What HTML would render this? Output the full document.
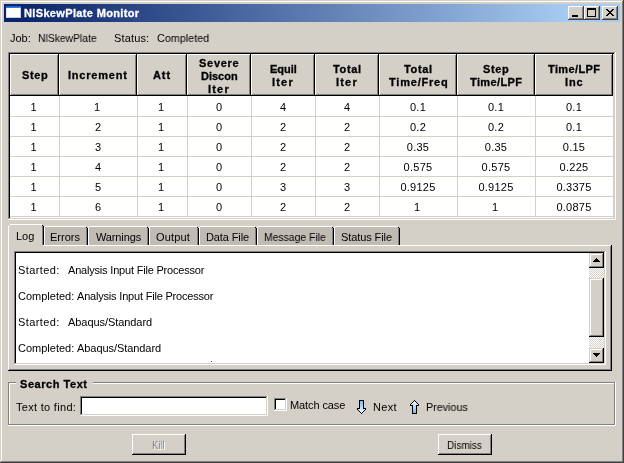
<!DOCTYPE html>
<html><head><meta charset="utf-8"><title>NlSkewPlate Monitor</title>
<style>
html,body{margin:0;padding:0;}
body{width:624px;height:463px;background:#d4d0c8;position:relative;overflow:hidden;font-family:"Liberation Sans",sans-serif;font-size:11px;line-height:13px;color:#000;}
body>div,body>span,body>svg{position:absolute;display:block;}
.t{white-space:pre;height:13px;will-change:transform;}
</style></head><body>
<div style="left:0px;top:0px;width:623px;height:1px;background:#d4d0c8;"></div>
<div style="left:0px;top:0px;width:1px;height:462px;background:#d4d0c8;"></div>
<div style="left:1px;top:1px;width:621px;height:1px;background:#ffffff;"></div>
<div style="left:1px;top:1px;width:1px;height:460px;background:#ffffff;"></div>
<div style="left:623px;top:0px;width:1px;height:463px;background:#404040;"></div>
<div style="left:0px;top:462px;width:624px;height:1px;background:#404040;"></div>
<div style="left:622px;top:1px;width:1px;height:461px;background:#808080;"></div>
<div style="left:1px;top:461px;width:622px;height:1px;background:#808080;"></div>
<div style="left:4px;top:4px;width:616px;height:18px;background:linear-gradient(to right,#0a246a 18px,#a6caf0 563px);"></div>
<svg style="left:6px;top:6px" width="15" height="12" viewBox="0 0 15 12" shape-rendering="crispEdges">
<rect x="0" y="0" width="15" height="12" fill="#fffffa"/>
<rect x="0" y="0" width="15" height="2" fill="#2b7de0"/>
<rect x="0" y="0" width="15" height="1" fill="#1a5fc8"/>
<rect x="0" y="2" width="1" height="10" fill="#e8e8f0"/>
<rect x="14" y="2" width="1" height="10" fill="#c8d0e8"/>
<rect x="0" y="11" width="15" height="1" fill="#c8d0e8"/>
<rect x="13" y="1" width="1" height="1" fill="#f08030"/>
</svg>
<span class="t" id="title" style="top:7px;left:24px;letter-spacing:0.350px;font-weight:bold;-webkit-text-stroke:0.3px;color:#fff;">NlSkewPlate Monitor</span>
<div style="left:568px;top:6px;width:16px;height:14px;background:#d4d0c8;"></div>
<div style="left:568px;top:6px;width:15px;height:1px;background:#ffffff;"></div>
<div style="left:568px;top:6px;width:1px;height:13px;background:#ffffff;"></div>
<div style="left:568px;top:19px;width:16px;height:1px;background:#404040;"></div>
<div style="left:583px;top:6px;width:1px;height:14px;background:#404040;"></div>
<div style="left:569px;top:18px;width:14px;height:1px;background:#808080;"></div>
<div style="left:582px;top:7px;width:1px;height:12px;background:#808080;"></div>
<div style="left:584px;top:6px;width:16px;height:14px;background:#d4d0c8;"></div>
<div style="left:584px;top:6px;width:15px;height:1px;background:#ffffff;"></div>
<div style="left:584px;top:6px;width:1px;height:13px;background:#ffffff;"></div>
<div style="left:584px;top:19px;width:16px;height:1px;background:#404040;"></div>
<div style="left:599px;top:6px;width:1px;height:14px;background:#404040;"></div>
<div style="left:585px;top:18px;width:14px;height:1px;background:#808080;"></div>
<div style="left:598px;top:7px;width:1px;height:12px;background:#808080;"></div>
<div style="left:602px;top:6px;width:16px;height:14px;background:#d4d0c8;"></div>
<div style="left:602px;top:6px;width:15px;height:1px;background:#ffffff;"></div>
<div style="left:602px;top:6px;width:1px;height:13px;background:#ffffff;"></div>
<div style="left:602px;top:19px;width:16px;height:1px;background:#404040;"></div>
<div style="left:617px;top:6px;width:1px;height:14px;background:#404040;"></div>
<div style="left:603px;top:18px;width:14px;height:1px;background:#808080;"></div>
<div style="left:616px;top:7px;width:1px;height:12px;background:#808080;"></div>
<div style="left:572px;top:15px;width:6px;height:2px;background:#000000;"></div>
<div style="left:587px;top:8px;width:9px;height:9px;background:#000000;"></div>
<div style="left:588px;top:10px;width:7px;height:6px;background:#d4d0c8;"></div>
<svg style="left:606px;top:9px" width="8" height="7" viewBox="0 0 8 7" shape-rendering="crispEdges">
<path d="M0 0h2v1h-2zM6 0h2v1h-2zM1 1h2v1h-2zM5 1h2v1h-2zM2 2h4v1h-4zM3 3h2v1h-2zM2 4h4v1h-4zM1 5h2v1h-2zM5 5h2v1h-2zM0 6h2v1h-2zM6 6h2v1h-2z" fill="#000"/></svg>
<span class="t" id="job" style="top:32px;left:10px;">Job:</span>
<span class="t" id="jobn" style="top:32px;left:38px;transform:scaleX(0.9410);transform-origin:0 0;">NlSkewPlate</span>
<span class="t" id="status" style="top:32px;left:114px;letter-spacing:0.150px;">Status:</span>
<span class="t" id="statv" style="top:32px;left:157px;transform:scaleX(0.9824);transform-origin:0 0;">Completed</span>
<div style="left:8px;top:52px;width:607px;height:1px;background:#808080;"></div>
<div style="left:8px;top:52px;width:1px;height:167px;background:#808080;"></div>
<div style="left:9px;top:53px;width:605px;height:1px;background:#000000;"></div>
<div style="left:9px;top:53px;width:1px;height:165px;background:#000000;"></div>
<div style="left:9px;top:218px;width:606px;height:1px;background:#d4d0c8;"></div>
<div style="left:614px;top:53px;width:1px;height:166px;background:#d4d0c8;"></div>
<div style="left:8px;top:219px;width:608px;height:1px;background:#ffffff;"></div>
<div style="left:615px;top:52px;width:1px;height:168px;background:#ffffff;"></div>
<div style="left:10px;top:96px;width:603px;height:122px;background:#ffffff;"></div>
<div style="left:10px;top:54px;width:48px;height:1px;background:#ffffff;"></div>
<div style="left:10px;top:54px;width:1px;height:41px;background:#ffffff;"></div>
<div style="left:11px;top:94px;width:47px;height:1px;background:#808080;"></div>
<div style="left:57px;top:55px;width:1px;height:40px;background:#808080;"></div>
<div style="left:10px;top:95px;width:49px;height:1px;background:#000000;"></div>
<div style="left:58px;top:54px;width:1px;height:42px;background:#000000;"></div>
<span class="t" id="h0_0" style="top:69px;left:21.9px;letter-spacing:0.600px;font-weight:bold;-webkit-text-stroke:0.3px;">Step</span>
<div style="left:59px;top:54px;width:77px;height:1px;background:#ffffff;"></div>
<div style="left:59px;top:54px;width:1px;height:41px;background:#ffffff;"></div>
<div style="left:60px;top:94px;width:76px;height:1px;background:#808080;"></div>
<div style="left:135px;top:55px;width:1px;height:40px;background:#808080;"></div>
<div style="left:59px;top:95px;width:78px;height:1px;background:#000000;"></div>
<div style="left:136px;top:54px;width:1px;height:42px;background:#000000;"></div>
<span class="t" id="h1_0" style="top:69px;left:68.4px;letter-spacing:0.787px;font-weight:bold;-webkit-text-stroke:0.3px;">Increment</span>
<div style="left:137px;top:54px;width:49px;height:1px;background:#ffffff;"></div>
<div style="left:137px;top:54px;width:1px;height:41px;background:#ffffff;"></div>
<div style="left:138px;top:94px;width:48px;height:1px;background:#808080;"></div>
<div style="left:185px;top:55px;width:1px;height:40px;background:#808080;"></div>
<div style="left:137px;top:95px;width:50px;height:1px;background:#000000;"></div>
<div style="left:186px;top:54px;width:1px;height:42px;background:#000000;"></div>
<span class="t" id="h2_0" style="top:69px;left:153.15px;letter-spacing:0.900px;font-weight:bold;-webkit-text-stroke:0.3px;">Att</span>
<div style="left:187px;top:54px;width:63px;height:1px;background:#ffffff;"></div>
<div style="left:187px;top:54px;width:1px;height:41px;background:#ffffff;"></div>
<div style="left:188px;top:94px;width:62px;height:1px;background:#808080;"></div>
<div style="left:249px;top:55px;width:1px;height:40px;background:#808080;"></div>
<div style="left:187px;top:95px;width:64px;height:1px;background:#000000;"></div>
<div style="left:250px;top:54px;width:1px;height:42px;background:#000000;"></div>
<span class="t" id="h3_0" style="top:57px;left:199.4px;letter-spacing:0.720px;font-weight:bold;-webkit-text-stroke:0.3px;">Severe</span>
<span class="t" id="h3_1" style="top:70px;left:200.9px;font-weight:bold;-webkit-text-stroke:0.3px;">Discon</span>
<span class="t" id="h3_2" style="top:83px;left:208.4px;letter-spacing:1.200px;font-weight:bold;-webkit-text-stroke:0.3px;">Iter</span>
<div style="left:251px;top:54px;width:63px;height:1px;background:#ffffff;"></div>
<div style="left:251px;top:54px;width:1px;height:41px;background:#ffffff;"></div>
<div style="left:252px;top:94px;width:62px;height:1px;background:#808080;"></div>
<div style="left:313px;top:55px;width:1px;height:40px;background:#808080;"></div>
<div style="left:251px;top:95px;width:64px;height:1px;background:#000000;"></div>
<div style="left:314px;top:54px;width:1px;height:42px;background:#000000;"></div>
<span class="t" id="h4_0" style="top:63px;left:269.9px;font-weight:bold;-webkit-text-stroke:0.3px;">Equil</span>
<span class="t" id="h4_1" style="top:76px;left:272.4px;letter-spacing:1.200px;font-weight:bold;-webkit-text-stroke:0.3px;">Iter</span>
<div style="left:315px;top:54px;width:63px;height:1px;background:#ffffff;"></div>
<div style="left:315px;top:54px;width:1px;height:41px;background:#ffffff;"></div>
<div style="left:316px;top:94px;width:62px;height:1px;background:#808080;"></div>
<div style="left:377px;top:55px;width:1px;height:40px;background:#808080;"></div>
<div style="left:315px;top:95px;width:64px;height:1px;background:#000000;"></div>
<div style="left:378px;top:54px;width:1px;height:42px;background:#000000;"></div>
<span class="t" id="h5_0" style="top:63px;left:332.9px;letter-spacing:0.675px;font-weight:bold;-webkit-text-stroke:0.3px;">Total</span>
<span class="t" id="h5_1" style="top:76px;left:336.4px;letter-spacing:1.200px;font-weight:bold;-webkit-text-stroke:0.3px;">Iter</span>
<div style="left:379px;top:54px;width:77px;height:1px;background:#ffffff;"></div>
<div style="left:379px;top:54px;width:1px;height:41px;background:#ffffff;"></div>
<div style="left:380px;top:94px;width:76px;height:1px;background:#808080;"></div>
<div style="left:455px;top:55px;width:1px;height:40px;background:#808080;"></div>
<div style="left:379px;top:95px;width:78px;height:1px;background:#000000;"></div>
<div style="left:456px;top:54px;width:1px;height:42px;background:#000000;"></div>
<span class="t" id="h6_0" style="top:63px;left:403.9px;letter-spacing:0.675px;font-weight:bold;-webkit-text-stroke:0.3px;">Total</span>
<span class="t" id="h6_1" style="top:76px;left:388.9px;letter-spacing:0.788px;font-weight:bold;-webkit-text-stroke:0.3px;">Time/Freq</span>
<div style="left:457px;top:54px;width:77px;height:1px;background:#ffffff;"></div>
<div style="left:457px;top:54px;width:1px;height:41px;background:#ffffff;"></div>
<div style="left:458px;top:94px;width:76px;height:1px;background:#808080;"></div>
<div style="left:533px;top:55px;width:1px;height:40px;background:#808080;"></div>
<div style="left:457px;top:95px;width:78px;height:1px;background:#000000;"></div>
<div style="left:534px;top:54px;width:1px;height:42px;background:#000000;"></div>
<span class="t" id="h7_0" style="top:63px;left:483.4px;letter-spacing:0.600px;font-weight:bold;-webkit-text-stroke:0.3px;">Step</span>
<span class="t" id="h7_1" style="top:76px;left:469.9px;letter-spacing:0.386px;font-weight:bold;-webkit-text-stroke:0.3px;">Time/LPF</span>
<div style="left:535px;top:54px;width:77px;height:1px;background:#ffffff;"></div>
<div style="left:535px;top:54px;width:1px;height:41px;background:#ffffff;"></div>
<div style="left:536px;top:94px;width:76px;height:1px;background:#808080;"></div>
<div style="left:611px;top:55px;width:1px;height:40px;background:#808080;"></div>
<div style="left:535px;top:95px;width:78px;height:1px;background:#000000;"></div>
<div style="left:612px;top:54px;width:1px;height:42px;background:#000000;"></div>
<span class="t" id="h8_0" style="top:63px;left:547.9px;letter-spacing:0.386px;font-weight:bold;-webkit-text-stroke:0.3px;">Time/LPF</span>
<span class="t" id="h8_1" style="top:76px;left:565.15px;letter-spacing:0.900px;font-weight:bold;-webkit-text-stroke:0.3px;">Inc</span>
<div style="left:59px;top:96px;width:1px;height:121px;background:#d4d0c8;"></div>
<div style="left:137px;top:96px;width:1px;height:121px;background:#d4d0c8;"></div>
<div style="left:187px;top:96px;width:1px;height:121px;background:#d4d0c8;"></div>
<div style="left:251px;top:96px;width:1px;height:121px;background:#d4d0c8;"></div>
<div style="left:315px;top:96px;width:1px;height:121px;background:#d4d0c8;"></div>
<div style="left:379px;top:96px;width:1px;height:121px;background:#d4d0c8;"></div>
<div style="left:457px;top:96px;width:1px;height:121px;background:#d4d0c8;"></div>
<div style="left:535px;top:96px;width:1px;height:121px;background:#d4d0c8;"></div>
<div style="left:613px;top:96px;width:1px;height:122px;background:#d4d0c8;"></div>
<div style="left:10px;top:116px;width:604px;height:1px;background:#d4d0c8;"></div>
<div style="left:10px;top:136px;width:604px;height:1px;background:#d4d0c8;"></div>
<div style="left:10px;top:156px;width:604px;height:1px;background:#d4d0c8;"></div>
<div style="left:10px;top:176px;width:604px;height:1px;background:#d4d0c8;"></div>
<div style="left:10px;top:196px;width:604px;height:1px;background:#d4d0c8;"></div>
<div style="left:10px;top:216px;width:604px;height:1px;background:#d4d0c8;"></div>
<span class="t" id="d0_0" style="top:101px;left:9px;width:49px;text-align:center;">1</span>
<span class="t" id="d0_1" style="top:101px;left:58px;width:78px;text-align:center;">1</span>
<span class="t" id="d0_2" style="top:101px;left:136px;width:50px;text-align:center;">1</span>
<span class="t" id="d0_3" style="top:101px;left:187px;width:64px;text-align:center;">0</span>
<span class="t" id="d0_4" style="top:101px;left:251px;width:64px;text-align:center;">4</span>
<span class="t" id="d0_5" style="top:101px;left:315px;width:64px;text-align:center;">4</span>
<span class="t" id="d0_6" style="top:101px;left:378.6px;width:78px;text-align:center;letter-spacing:0.250px;">0.1</span>
<span class="t" id="d0_7" style="top:101px;left:456.6px;width:78px;text-align:center;letter-spacing:0.250px;">0.1</span>
<span class="t" id="d0_8" style="top:101px;left:534.6px;width:78px;text-align:center;letter-spacing:0.250px;">0.1</span>
<span class="t" id="d1_0" style="top:121px;left:9px;width:49px;text-align:center;">1</span>
<span class="t" id="d1_1" style="top:121px;left:59px;width:78px;text-align:center;">2</span>
<span class="t" id="d1_2" style="top:121px;left:136px;width:50px;text-align:center;">1</span>
<span class="t" id="d1_3" style="top:121px;left:187px;width:64px;text-align:center;">0</span>
<span class="t" id="d1_4" style="top:121px;left:251px;width:64px;text-align:center;">2</span>
<span class="t" id="d1_5" style="top:121px;left:315px;width:64px;text-align:center;">2</span>
<span class="t" id="d1_6" style="top:121px;left:378.6px;width:78px;text-align:center;letter-spacing:0.250px;">0.2</span>
<span class="t" id="d1_7" style="top:121px;left:456.6px;width:78px;text-align:center;letter-spacing:0.250px;">0.2</span>
<span class="t" id="d1_8" style="top:121px;left:534.6px;width:78px;text-align:center;letter-spacing:0.250px;">0.1</span>
<span class="t" id="d2_0" style="top:141px;left:9px;width:49px;text-align:center;">1</span>
<span class="t" id="d2_1" style="top:141px;left:59px;width:78px;text-align:center;">3</span>
<span class="t" id="d2_2" style="top:141px;left:136px;width:50px;text-align:center;">1</span>
<span class="t" id="d2_3" style="top:141px;left:187px;width:64px;text-align:center;">0</span>
<span class="t" id="d2_4" style="top:141px;left:251px;width:64px;text-align:center;">2</span>
<span class="t" id="d2_5" style="top:141px;left:315px;width:64px;text-align:center;">2</span>
<span class="t" id="d2_6" style="top:141px;left:378.6px;width:78px;text-align:center;letter-spacing:0.250px;">0.35</span>
<span class="t" id="d2_7" style="top:141px;left:456.6px;width:78px;text-align:center;letter-spacing:0.250px;">0.35</span>
<span class="t" id="d2_8" style="top:141px;left:534.6px;width:78px;text-align:center;letter-spacing:0.250px;">0.15</span>
<span class="t" id="d3_0" style="top:161px;left:9px;width:49px;text-align:center;">1</span>
<span class="t" id="d3_1" style="top:161px;left:59px;width:78px;text-align:center;">4</span>
<span class="t" id="d3_2" style="top:161px;left:136px;width:50px;text-align:center;">1</span>
<span class="t" id="d3_3" style="top:161px;left:187px;width:64px;text-align:center;">0</span>
<span class="t" id="d3_4" style="top:161px;left:251px;width:64px;text-align:center;">2</span>
<span class="t" id="d3_5" style="top:161px;left:315px;width:64px;text-align:center;">2</span>
<span class="t" id="d3_6" style="top:161px;left:378.6px;width:78px;text-align:center;letter-spacing:0.250px;">0.575</span>
<span class="t" id="d3_7" style="top:161px;left:456.6px;width:78px;text-align:center;letter-spacing:0.250px;">0.575</span>
<span class="t" id="d3_8" style="top:161px;left:534.6px;width:78px;text-align:center;letter-spacing:0.250px;">0.225</span>
<span class="t" id="d4_0" style="top:181px;left:9px;width:49px;text-align:center;">1</span>
<span class="t" id="d4_1" style="top:181px;left:59px;width:78px;text-align:center;">5</span>
<span class="t" id="d4_2" style="top:181px;left:136px;width:50px;text-align:center;">1</span>
<span class="t" id="d4_3" style="top:181px;left:187px;width:64px;text-align:center;">0</span>
<span class="t" id="d4_4" style="top:181px;left:251px;width:64px;text-align:center;">3</span>
<span class="t" id="d4_5" style="top:181px;left:315px;width:64px;text-align:center;">3</span>
<span class="t" id="d4_6" style="top:181px;left:378.6px;width:78px;text-align:center;letter-spacing:0.250px;">0.9125</span>
<span class="t" id="d4_7" style="top:181px;left:456.6px;width:78px;text-align:center;letter-spacing:0.250px;">0.9125</span>
<span class="t" id="d4_8" style="top:181px;left:534.6px;width:78px;text-align:center;letter-spacing:0.250px;">0.3375</span>
<span class="t" id="d5_0" style="top:201px;left:9px;width:49px;text-align:center;">1</span>
<span class="t" id="d5_1" style="top:201px;left:59px;width:78px;text-align:center;">6</span>
<span class="t" id="d5_2" style="top:201px;left:136px;width:50px;text-align:center;">1</span>
<span class="t" id="d5_3" style="top:201px;left:187px;width:64px;text-align:center;">0</span>
<span class="t" id="d5_4" style="top:201px;left:251px;width:64px;text-align:center;">2</span>
<span class="t" id="d5_5" style="top:201px;left:315px;width:64px;text-align:center;">2</span>
<span class="t" id="d5_6" style="top:201px;left:378px;width:78px;text-align:center;">1</span>
<span class="t" id="d5_7" style="top:201px;left:456px;width:78px;text-align:center;">1</span>
<span class="t" id="d5_8" style="top:201px;left:534.6px;width:78px;text-align:center;letter-spacing:0.250px;">0.0875</span>
<div style="left:8px;top:245px;width:603px;height:1px;background:#ffffff;"></div>
<div style="left:8px;top:226px;width:1px;height:144px;background:#ffffff;"></div>
<div style="left:610px;top:246px;width:1px;height:124px;background:#808080;"></div>
<div style="left:9px;top:369px;width:602px;height:1px;background:#808080;"></div>
<div style="left:611px;top:245px;width:1px;height:126px;background:#000000;"></div>
<div style="left:8px;top:370px;width:604px;height:1px;background:#000000;"></div>
<div style="left:9px;top:225px;width:34px;height:21px;background:#d4d0c8;"></div>
<div style="left:10px;top:224px;width:32px;height:1px;background:#ffffff;"></div>
<div style="left:9px;top:225px;width:1px;height:1px;background:#ffffff;"></div>
<div style="left:8px;top:226px;width:1px;height:21px;background:#ffffff;"></div>
<div style="left:42px;top:225px;width:1px;height:1px;background:#000000;"></div>
<div style="left:42px;top:226px;width:1px;height:19px;background:#808080;"></div>
<div style="left:43px;top:226px;width:1px;height:19px;background:#000000;"></div>
<span class="t" id="tab0" style="top:230px;left:16px;">Log</span>
<div style="left:45px;top:227px;width:41px;height:18px;background:#c0bcb4;"></div>
<div style="left:45px;top:226px;width:41px;height:1px;background:#ffffff;"></div>
<div style="left:44px;top:227px;width:1px;height:18px;background:#ffffff;"></div>
<div style="left:86px;top:227px;width:1px;height:1px;background:#000000;"></div>
<div style="left:86px;top:228px;width:1px;height:17px;background:#808080;"></div>
<div style="left:87px;top:228px;width:1px;height:17px;background:#000000;"></div>
<span class="t" id="tab1" style="top:231px;left:50px;">Errors</span>
<div style="left:89px;top:227px;width:58px;height:18px;background:#c0bcb4;"></div>
<div style="left:89px;top:226px;width:58px;height:1px;background:#ffffff;"></div>
<div style="left:88px;top:227px;width:1px;height:18px;background:#ffffff;"></div>
<div style="left:147px;top:227px;width:1px;height:1px;background:#000000;"></div>
<div style="left:147px;top:228px;width:1px;height:17px;background:#808080;"></div>
<div style="left:148px;top:228px;width:1px;height:17px;background:#000000;"></div>
<span class="t" id="tab2" style="top:231px;left:96px;letter-spacing:-0.129px;">Warnings</span>
<div style="left:150px;top:227px;width:47px;height:18px;background:#c0bcb4;"></div>
<div style="left:150px;top:226px;width:47px;height:1px;background:#ffffff;"></div>
<div style="left:149px;top:227px;width:1px;height:18px;background:#ffffff;"></div>
<div style="left:197px;top:227px;width:1px;height:1px;background:#000000;"></div>
<div style="left:197px;top:228px;width:1px;height:17px;background:#808080;"></div>
<div style="left:198px;top:228px;width:1px;height:17px;background:#000000;"></div>
<span class="t" id="tab3" style="top:231px;left:156px;letter-spacing:0.180px;">Output</span>
<div style="left:200px;top:227px;width:55px;height:18px;background:#c0bcb4;"></div>
<div style="left:200px;top:226px;width:55px;height:1px;background:#ffffff;"></div>
<div style="left:199px;top:227px;width:1px;height:18px;background:#ffffff;"></div>
<div style="left:255px;top:227px;width:1px;height:1px;background:#000000;"></div>
<div style="left:255px;top:228px;width:1px;height:17px;background:#808080;"></div>
<div style="left:256px;top:228px;width:1px;height:17px;background:#000000;"></div>
<span class="t" id="tab4" style="top:231px;left:205.7px;letter-spacing:-0.113px;">Data File</span>
<div style="left:258px;top:227px;width:74px;height:18px;background:#c0bcb4;"></div>
<div style="left:258px;top:226px;width:74px;height:1px;background:#ffffff;"></div>
<div style="left:257px;top:227px;width:1px;height:18px;background:#ffffff;"></div>
<div style="left:332px;top:227px;width:1px;height:1px;background:#000000;"></div>
<div style="left:332px;top:228px;width:1px;height:17px;background:#808080;"></div>
<div style="left:333px;top:228px;width:1px;height:17px;background:#000000;"></div>
<span class="t" id="tab5" style="top:231px;left:264px;transform:scaleX(0.9438);transform-origin:0 0;">Message File</span>
<div style="left:335px;top:227px;width:63px;height:18px;background:#c0bcb4;"></div>
<div style="left:335px;top:226px;width:63px;height:1px;background:#ffffff;"></div>
<div style="left:334px;top:227px;width:1px;height:18px;background:#ffffff;"></div>
<div style="left:398px;top:227px;width:1px;height:1px;background:#000000;"></div>
<div style="left:398px;top:228px;width:1px;height:17px;background:#808080;"></div>
<div style="left:399px;top:228px;width:1px;height:17px;background:#000000;"></div>
<span class="t" id="tab6" style="top:231px;left:341px;letter-spacing:-0.090px;">Status File</span>
<div style="left:14px;top:251px;width:591px;height:1px;background:#808080;"></div>
<div style="left:14px;top:251px;width:1px;height:113px;background:#808080;"></div>
<div style="left:15px;top:252px;width:589px;height:1px;background:#000000;"></div>
<div style="left:15px;top:252px;width:1px;height:111px;background:#000000;"></div>
<div style="left:15px;top:363px;width:590px;height:1px;background:#d4d0c8;"></div>
<div style="left:604px;top:252px;width:1px;height:112px;background:#d4d0c8;"></div>
<div style="left:14px;top:364px;width:592px;height:1px;background:#ffffff;"></div>
<div style="left:605px;top:251px;width:1px;height:114px;background:#ffffff;"></div>
<div style="left:16px;top:253px;width:573px;height:110px;background:#ffffff;"></div>
<span class="t" id="l0a" style="top:264px;left:18px;letter-spacing:0.386px;">Started:</span>
<span class="t" id="l0b" style="top:264px;left:68px;letter-spacing:-0.193px;">Analysis Input File Processor</span>
<span class="t" id="l1a" style="top:290px;left:18px;">Completed:</span>
<span class="t" id="l1b" style="top:290px;left:77px;letter-spacing:-0.193px;">Analysis Input File Processor</span>
<span class="t" id="l2a" style="top:316px;left:18px;letter-spacing:0.386px;">Started:</span>
<span class="t" id="l2b" style="top:316px;left:68px;letter-spacing:-0.064px;">Abaqus/Standard</span>
<span class="t" id="l3a" style="top:342px;left:18px;">Completed:</span>
<span class="t" id="l3b" style="top:342px;left:77px;letter-spacing:-0.064px;">Abaqus/Standard</span>
<div style="left:211px;top:361px;width:1px;height:1px;background:#cc0000;"></div>
<svg style="left:589px;top:253px" width="15" height="110" shape-rendering="crispEdges">
<defs><pattern id="ck" width="2" height="2" patternUnits="userSpaceOnUse"><rect width="2" height="2" fill="#fff"/><rect x="0" y="0" width="1" height="1" fill="#d4d0c8"/><rect x="1" y="1" width="1" height="1" fill="#d4d0c8"/></pattern></defs>
<rect width="15" height="110" fill="url(#ck)"/></svg>
<div style="left:589px;top:253px;width:15px;height:15px;background:#d4d0c8;"></div>
<div style="left:590px;top:254px;width:12px;height:1px;background:#ffffff;"></div>
<div style="left:590px;top:254px;width:1px;height:12px;background:#ffffff;"></div>
<div style="left:589px;top:267px;width:15px;height:1px;background:#000000;"></div>
<div style="left:603px;top:253px;width:1px;height:15px;background:#000000;"></div>
<div style="left:590px;top:266px;width:13px;height:1px;background:#808080;"></div>
<div style="left:602px;top:254px;width:1px;height:13px;background:#808080;"></div>
<div style="left:589px;top:348px;width:15px;height:15px;background:#d4d0c8;"></div>
<div style="left:590px;top:349px;width:12px;height:1px;background:#ffffff;"></div>
<div style="left:590px;top:349px;width:1px;height:12px;background:#ffffff;"></div>
<div style="left:589px;top:362px;width:15px;height:1px;background:#000000;"></div>
<div style="left:603px;top:348px;width:1px;height:15px;background:#000000;"></div>
<div style="left:590px;top:361px;width:13px;height:1px;background:#808080;"></div>
<div style="left:602px;top:349px;width:1px;height:13px;background:#808080;"></div>
<div style="left:589px;top:278px;width:15px;height:59px;background:#d4d0c8;"></div>
<div style="left:590px;top:279px;width:12px;height:1px;background:#ffffff;"></div>
<div style="left:590px;top:279px;width:1px;height:56px;background:#ffffff;"></div>
<div style="left:589px;top:336px;width:15px;height:1px;background:#000000;"></div>
<div style="left:603px;top:278px;width:1px;height:59px;background:#000000;"></div>
<div style="left:590px;top:335px;width:13px;height:1px;background:#808080;"></div>
<div style="left:602px;top:279px;width:1px;height:57px;background:#808080;"></div>
<div style="left:596px;top:258px;width:1px;height:1px;background:#000000;"></div>
<div style="left:596px;top:356px;width:1px;height:1px;background:#000000;"></div>
<div style="left:595px;top:259px;width:3px;height:1px;background:#000000;"></div>
<div style="left:595px;top:355px;width:3px;height:1px;background:#000000;"></div>
<div style="left:594px;top:260px;width:5px;height:1px;background:#000000;"></div>
<div style="left:594px;top:354px;width:5px;height:1px;background:#000000;"></div>
<div style="left:593px;top:261px;width:7px;height:1px;background:#000000;"></div>
<div style="left:593px;top:353px;width:7px;height:1px;background:#000000;"></div>
<div style="left:8px;top:382px;width:607px;height:1px;background:#808080;"></div>
<div style="left:8px;top:382px;width:1px;height:43px;background:#808080;"></div>
<div style="left:9px;top:383px;width:605px;height:1px;background:#ffffff;"></div>
<div style="left:9px;top:383px;width:1px;height:41px;background:#ffffff;"></div>
<div style="left:9px;top:424px;width:606px;height:1px;background:#808080;"></div>
<div style="left:614px;top:383px;width:1px;height:42px;background:#808080;"></div>
<div style="left:8px;top:425px;width:608px;height:1px;background:#ffffff;"></div>
<div style="left:615px;top:382px;width:1px;height:44px;background:#ffffff;"></div>
<div style="left:16px;top:378px;width:77px;height:12px;background:#d4d0c8;"></div>
<span class="t" id="grp" style="top:378px;left:20px;letter-spacing:0.540px;font-weight:bold;-webkit-text-stroke:0.3px;">Search Text</span>
<span class="t" id="find" style="top:401px;left:16px;letter-spacing:0.300px;">Text to find:</span>
<div style="left:80px;top:396px;width:187px;height:1px;background:#808080;"></div>
<div style="left:80px;top:396px;width:1px;height:19px;background:#808080;"></div>
<div style="left:81px;top:397px;width:185px;height:1px;background:#000000;"></div>
<div style="left:81px;top:397px;width:1px;height:17px;background:#000000;"></div>
<div style="left:81px;top:414px;width:186px;height:1px;background:#d4d0c8;"></div>
<div style="left:266px;top:397px;width:1px;height:18px;background:#d4d0c8;"></div>
<div style="left:80px;top:415px;width:188px;height:1px;background:#ffffff;"></div>
<div style="left:267px;top:396px;width:1px;height:20px;background:#ffffff;"></div>
<div style="left:82px;top:398px;width:184px;height:16px;background:#ffffff;"></div>
<div style="left:274px;top:398px;width:12px;height:1px;background:#808080;"></div>
<div style="left:274px;top:398px;width:1px;height:12px;background:#808080;"></div>
<div style="left:275px;top:399px;width:10px;height:1px;background:#000000;"></div>
<div style="left:275px;top:399px;width:1px;height:10px;background:#000000;"></div>
<div style="left:275px;top:409px;width:11px;height:1px;background:#d4d0c8;"></div>
<div style="left:285px;top:399px;width:1px;height:11px;background:#d4d0c8;"></div>
<div style="left:274px;top:410px;width:13px;height:1px;background:#ffffff;"></div>
<div style="left:286px;top:398px;width:1px;height:13px;background:#ffffff;"></div>
<div style="left:276px;top:400px;width:9px;height:9px;background:#ffffff;"></div>
<span class="t" id="match" style="top:399px;left:290px;letter-spacing:-0.100px;">Match case</span>
<svg style="left:357px;top:400px" width="9" height="14" viewBox="0 0 9 14" shape-rendering="crispEdges"><rect x="4" y="13" width="1" height="1" fill="#000"/><rect x="3" y="12" width="3" height="1" fill="#000"/><rect x="4" y="12" width="1" height="1" fill="#f4f9fe"/><rect x="2" y="11" width="5" height="1" fill="#000"/><rect x="3" y="11" width="3" height="1" fill="#e9f3fd"/><rect x="1" y="10" width="7" height="1" fill="#000"/><rect x="2" y="10" width="5" height="1" fill="#deeefc"/><rect x="0" y="9" width="9" height="1" fill="#000"/><rect x="1" y="9" width="7" height="1" fill="#d3e8fc"/><rect x="0" y="8" width="3" height="1" fill="#000"/><rect x="6" y="8" width="3" height="1" fill="#000"/><rect x="3" y="8" width="3" height="1" fill="#c8e2fb"/><rect x="2" y="7" width="5" height="1" fill="#000"/><rect x="3" y="7" width="3" height="1" fill="#bddcfa"/><rect x="2" y="6" width="5" height="1" fill="#000"/><rect x="3" y="6" width="3" height="1" fill="#b2d7f9"/><rect x="2" y="5" width="5" height="1" fill="#000"/><rect x="3" y="5" width="3" height="1" fill="#a7d1f8"/><rect x="2" y="4" width="5" height="1" fill="#000"/><rect x="3" y="4" width="3" height="1" fill="#9ccbf7"/><rect x="2" y="3" width="5" height="1" fill="#000"/><rect x="3" y="3" width="3" height="1" fill="#91c5f7"/><rect x="2" y="2" width="5" height="1" fill="#000"/><rect x="3" y="2" width="3" height="1" fill="#86c0f6"/><rect x="2" y="1" width="5" height="1" fill="#000"/><rect x="3" y="1" width="3" height="1" fill="#7bbaf5"/><rect x="2" y="0" width="5" height="1" fill="#000"/></svg>
<span class="t" id="next" style="top:401px;left:373px;letter-spacing:0.300px;">Next</span>
<svg style="left:410px;top:400px" width="9" height="14" viewBox="0 0 9 14" shape-rendering="crispEdges"><rect x="4" y="0" width="1" height="1" fill="#000"/><rect x="3" y="1" width="3" height="1" fill="#000"/><rect x="4" y="1" width="1" height="1" fill="#f4f9fe"/><rect x="2" y="2" width="5" height="1" fill="#000"/><rect x="3" y="2" width="3" height="1" fill="#e9f3fd"/><rect x="1" y="3" width="7" height="1" fill="#000"/><rect x="2" y="3" width="5" height="1" fill="#deeefc"/><rect x="0" y="4" width="9" height="1" fill="#000"/><rect x="1" y="4" width="7" height="1" fill="#d3e8fc"/><rect x="0" y="5" width="3" height="1" fill="#000"/><rect x="6" y="5" width="3" height="1" fill="#000"/><rect x="3" y="5" width="3" height="1" fill="#c8e2fb"/><rect x="2" y="6" width="5" height="1" fill="#000"/><rect x="3" y="6" width="3" height="1" fill="#bddcfa"/><rect x="2" y="7" width="5" height="1" fill="#000"/><rect x="3" y="7" width="3" height="1" fill="#b2d7f9"/><rect x="2" y="8" width="5" height="1" fill="#000"/><rect x="3" y="8" width="3" height="1" fill="#a7d1f8"/><rect x="2" y="9" width="5" height="1" fill="#000"/><rect x="3" y="9" width="3" height="1" fill="#9ccbf7"/><rect x="2" y="10" width="5" height="1" fill="#000"/><rect x="3" y="10" width="3" height="1" fill="#91c5f7"/><rect x="2" y="11" width="5" height="1" fill="#000"/><rect x="3" y="11" width="3" height="1" fill="#86c0f6"/><rect x="2" y="12" width="5" height="1" fill="#000"/><rect x="3" y="12" width="3" height="1" fill="#7bbaf5"/><rect x="2" y="13" width="5" height="1" fill="#000"/></svg>
<span class="t" id="prev" style="top:401px;left:426px;transform:scaleX(0.9780);transform-origin:0 0;">Previous</span>
<div style="left:132px;top:434px;width:53px;height:1px;background:#ffffff;"></div>
<div style="left:132px;top:434px;width:1px;height:20px;background:#ffffff;"></div>
<div style="left:132px;top:454px;width:54px;height:1px;background:#000000;"></div>
<div style="left:185px;top:434px;width:1px;height:21px;background:#000000;"></div>
<div style="left:133px;top:453px;width:52px;height:1px;background:#808080;"></div>
<div style="left:184px;top:435px;width:1px;height:19px;background:#808080;"></div>
<div style="left:438px;top:434px;width:53px;height:1px;background:#ffffff;"></div>
<div style="left:438px;top:434px;width:1px;height:20px;background:#ffffff;"></div>
<div style="left:438px;top:454px;width:54px;height:1px;background:#000000;"></div>
<div style="left:491px;top:434px;width:1px;height:21px;background:#000000;"></div>
<div style="left:439px;top:453px;width:52px;height:1px;background:#808080;"></div>
<div style="left:490px;top:435px;width:1px;height:19px;background:#808080;"></div>
<span class="t" id="kill" style="top:439px;left:152px;transform:scaleX(0.8615);transform-origin:0 0;color:#808080;text-shadow:1px 1px 0 #fff;">Kill</span>
<span class="t" id="dismiss" style="top:439px;left:447px;transform:scaleX(0.9027);transform-origin:0 0;">Dismiss</span>
</body></html>
